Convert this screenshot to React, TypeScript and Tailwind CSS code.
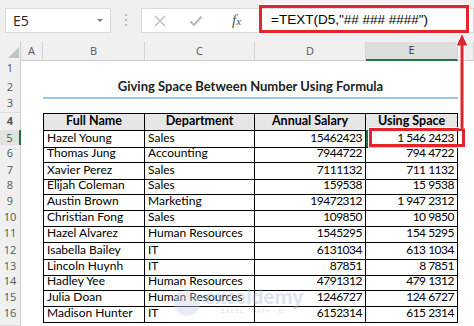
import React from 'react';

const cols = 'grid grid-cols-[21px_22px_102px_110px_111px_92px_16px]';

const data = [
  ['Hazel Young', 'Sales', '15462423', '1 546 2423'],
  ['Thomas Jung', 'Accounting', '7944722', '794 4722'],
  ['Xavier Perez', 'Sales', '7111132', '711 1132'],
  ['Elijah Coleman', 'Sales', '159538', '15 9538'],
  ['Austin Brown', 'Marketing', '19472312', '1 947 2312'],
  ['Christian Fong', 'Sales', '109850', '10 9850'],
  ['Hazel Alvarez', 'Human Resources', '1545295', '154 5295'],
  ['Isabella Bailey', 'IT', '6131034', '613 1034'],
  ['Lincoln Huynh', 'IT', '87851', '8 7851'],
  ['Hadley Yee', 'Human Resources', '4791312', '479 1312'],
  ['Julia Doan', 'Human Resources', '1246727', '124 6727'],
  ['Madison Hunter', 'IT', '6152314', '615 2314'],
];

const heights = ['h-[15px]', 'h-[17px]', 'h-[15px]', 'h-[16px]', 'h-[16px]', 'h-[16px]', 'h-[17px]', 'h-[16px]', 'h-[15px]', 'h-[16px]', 'h-[16px]', 'h-[15px]'];

const RowNum = ({ n, active }: { n?: number; active?: boolean }) => (
  <div
    className={`flex items-center justify-center border-b border-b-[#dcdcdc] text-[11px] font-['Open_Sans',sans-serif] ${
      active ? 'bg-[#e2e2e2] border-r-2 border-r-[#217346] text-[#217346]' : 'bg-[#f0f0f0] border-r border-r-[#cfcfcf] text-[#555]'
    }`}
  >
    {n}
  </div>
);

const ColHead = ({ label, active }: { label: string; active?: boolean }) => (
  <div
    className={`flex items-center justify-center border-r border-r-[#d4d4d4] text-[11px] font-['Open_Sans',sans-serif] ${
      active ? 'bg-[#dedede] border-b-2 border-b-[#217346] text-[#333]' : 'bg-[#f0f0f0] border-b border-b-[#cfcfcf] text-[#555]'
    }`}
  >
    {label}
  </div>
);

const cell = 'border-r border-b border-black flex items-center px-[3px] whitespace-nowrap overflow-hidden';

export default function App() {
  return (
    <div className="relative w-[474px] h-[326px] overflow-hidden bg-white font-['Lato',sans-serif] text-black">
      {/* formula bar */}
      <div className="h-[42px] bg-[#f0f0f0] flex items-start">
        <div className="ml-[5px] mt-[8px] w-[106px] h-[25px] bg-white border border-[#dadada] flex items-center justify-between pl-[7px] pr-[7px]">
          <span className="text-[14px] font-['Open_Sans',sans-serif] text-[#222]">E5</span>
          <span className="w-0 h-0 border-l-[3px] border-r-[3px] border-t-[3px] border-l-transparent border-r-transparent border-t-[#777]" />
        </div>
        <div className="ml-[14px] mt-[14px] flex flex-col gap-[3px]">
          <span className="w-[2px] h-[2px] bg-[#b5b5b5]" />
          <span className="w-[2px] h-[2px] bg-[#b5b5b5]" />
          <span className="w-[2px] h-[2px] bg-[#b5b5b5]" />
        </div>
        <div className="ml-[14px] mt-[8px] flex-1 h-[25px] bg-white border border-[#dadada] flex items-center">
          <svg width="14" height="14" viewBox="0 0 14 14" className="ml-[11px]">
            <path d="M2 2 L12 12 M12 2 L2 12" stroke="#b8b8b8" strokeWidth="1.3" />
          </svg>
          <svg width="14" height="14" viewBox="0 0 14 14" className="ml-[22px]">
            <path d="M1.5 7.5 L5 11 L12.5 2.5" stroke="#b8b8b8" strokeWidth="2" fill="none" />
          </svg>
          <span className="ml-[29px] text-[15px] italic font-['Liberation_Serif',serif] text-[#555]">
            f<span className="text-[11px]">x</span>
          </span>
          <span className="ml-[30px] text-[13.5px] font-['Liberation_Sans',sans-serif] text-black">=TEXT(D5,"## ### ####")</span>
        </div>
      </div>

      {/* column headers */}
      <div className={`${cols} h-[18px]`}>
        <div className="bg-[#f0f0f0] border-r border-b border-[#cfcfcf] flex items-end justify-end pr-[1px] pb-[2px]">
          <svg width="11" height="11" viewBox="0 0 11 11">
            <path d="M11 0 L11 11 L0 11 Z" fill="#c3c3c3" />
          </svg>
        </div>
        <ColHead label="A" />
        <ColHead label="B" />
        <ColHead label="C" />
        <ColHead label="D" />
        <ColHead label="E" active />
        <ColHead label="" />
      </div>

      {/* row 1 */}
      <div className={`${cols} h-[17px]`}>
        <RowNum n={1} />
        <div className="col-span-6" />
      </div>

      {/* row 2 title */}
      <div className={`${cols} h-[18px]`}>
        <RowNum n={2} />
        <div />
        <div className="col-span-4 border-b-2 border-[#9dc3e6] flex items-center justify-center text-[13px] font-bold text-[#222]">
          Giving Space Between Number Using Formula
        </div>
        <div />
      </div>

      {/* row 3 */}
      <div className={`${cols} h-[18px]`}>
        <RowNum n={3} />
        <div className="col-span-6" />
      </div>

      {/* row 4 header */}
      <div className={`${cols} h-[17px] text-[12.5px] font-bold`}>
        <RowNum n={4} />
        <div />
        <div className={`${cell} justify-center bg-[#e7e6e6] border-l border-t`}>Full Name</div>
        <div className={`${cell} justify-center bg-[#e7e6e6] border-t`}>Department</div>
        <div className={`${cell} justify-center bg-[#e7e6e6] border-t`}>Annual Salary</div>
        <div className={`${cell} justify-center bg-[#e7e6e6] border-t`}>Using Space</div>
        <div />
      </div>

      {data.map((r, i) => (
        <div key={r[0]} className={`${cols} ${heights[i]} text-[12px]`}>
          <RowNum n={i + 5} active={i === 0} />
          <div />
          <div className={`${cell} border-l`}>{r[0]}</div>
          <div className={cell}>{r[1]}</div>
          <div className={`${cell} justify-end tracking-[-0.5px]`}>{r[2]}</div>
          <div className={`${cell} justify-end tracking-[-0.5px] ${i === 0 ? 'shadow-[inset_2px_0_0_#217346]' : ''}`}>{r[3]}</div>
          <div />
        </div>
      ))}

      <div className={`${cols} h-[6px]`}>
        <RowNum />
        <div className="col-span-6" />
      </div>

      {/* red highlight on formula */}
      <div className="absolute left-[259px] top-[5px] w-[210px] h-[28px] border-[3px] border-[#e0262c] shadow-[0_0_0_1px_rgba(255,255,255,0.8)]" />
      {/* red highlight on E5 */}
      <div className="absolute left-[369px] top-[128px] w-[96px] h-[19px] border-[3px] border-[#e0262c] shadow-[0_0_0_1px_rgba(255,255,255,0.8)]" />
      {/* arrow */}
      <svg className="absolute left-[454px] top-[32px]" width="16" height="98" viewBox="0 0 16 98">
        <path d="M8 12 L8 97" stroke="white" strokeWidth="5" />
        <path d="M8 1 L14 14 L2 14 Z" fill="#e0262c" stroke="white" strokeWidth="1" />
        <path d="M8 13 L8 97" stroke="#e0262c" strokeWidth="3" />
      </svg>

      {/* watermark */}
      <div className="absolute left-[174px] top-[288px] flex items-start opacity-40 pointer-events-none">
        <div className="w-[26px] h-[26px] rounded-full bg-[#c9d6ea] mt-[2px]" />
        <div className="ml-[4px] flex flex-col items-center leading-none">
          <span className="text-[19px] font-bold text-[#a9bde0] font-['Open_Sans',sans-serif] tracking-[-0.3px]">exceldemy</span>
          <span className="text-[6px] text-[#b0b8c4] tracking-[1px] mt-[1px]">EXCEL · DATA · BI</span>
        </div>
      </div>
    </div>
  );
}
